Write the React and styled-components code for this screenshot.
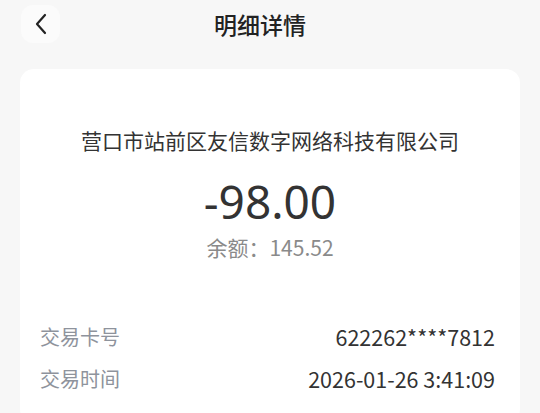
import React from 'react';
import styled, { createGlobalStyle } from 'styled-components';

const Global = createGlobalStyle`
  html, body {
    margin: 0;
    padding: 0;
    background: #f7f7f7;
    font-family: "Noto Sans CJK SC", "Noto Sans", sans-serif;
  }
`;

const Page = styled.div`
  width: 540px;
  min-height: 413px;
  overflow: hidden;
`;

const Header = styled.div`
  height: 48px;
  display: flex;
  align-items: center;
  justify-content: center;
  padding-right: 20px;
  position: relative;
`;

const BackButton = styled.button`
  position: absolute;
  left: 21px;
  top: 5px;
  width: 39px;
  height: 38px;
  border: none;
  border-radius: 12px;
  background: #fbfbfb;
  display: flex;
  align-items: center;
  justify-content: center;
  padding: 0;
`;

const Title = styled.h1`
  margin: 0;
  font-size: 23px;
  font-weight: 500;
  color: #222;
`;

const Card = styled.div`
  margin: 21px 20px 0;
  background: #fff;
  border-radius: 14px;
  padding: 56px 25px 30px 20px;
`;

const Summary = styled.div`
  display: flex;
  flex-direction: column;
  align-items: center;
  margin-right: -5px;
`;

const Merchant = styled.div`
  font-size: 21px;
  line-height: 30px;
  color: #333;
  white-space: nowrap;
`;

const Amount = styled.div`
  margin-top: 21px;
  font-size: 46px;
  line-height: 50px;
  color: #333;
  font-family: "Noto Sans", "Noto Sans CJK SC", sans-serif;
`;

const Balance = styled.div`
  margin-top: 7px;
  font-size: 21px;
  line-height: 28px;
  color: #8a8a8a;
`;

const Rows = styled.div`
  margin-top: 60px;
  display: flex;
  flex-direction: column;
  gap: 12px;
`;

const Row = styled.div`
  display: flex;
  justify-content: space-between;
  align-items: center;
  height: 30px;
`;

const Label = styled.span`
  font-size: 20px;
  color: #8e939c;
`;

const Value = styled.span`
  font-size: 21.5px;
  color: #333;
`;

const rows = [
  ['交易卡号', '622262****7812'],
  ['交易时间', '2026-01-26 3:41:09'],
];

export default function App() {
  return (
    <Page>
      <Global />
      <Header>
        <BackButton aria-label="返回">
          <svg width="14" height="22" viewBox="0 0 14 22" fill="none">
            <path d="M11 2 L3 11 L11 20" stroke="#222" strokeWidth="2.2" strokeLinecap="round" strokeLinejoin="round" />
          </svg>
        </BackButton>
        <Title>明细详情</Title>
      </Header>
      <Card>
        <Summary>
          <Merchant>营口市站前区友信数字网络科技有限公司</Merchant>
          <Amount>-98.00</Amount>
          <Balance>余额：145.52</Balance>
        </Summary>
        <Rows>
          {rows.map(([k, v]) => (
            <Row key={k}>
              <Label>{k}</Label>
              <Value>{v}</Value>
            </Row>
          ))}
        </Rows>
      </Card>
    </Page>
  );
}
